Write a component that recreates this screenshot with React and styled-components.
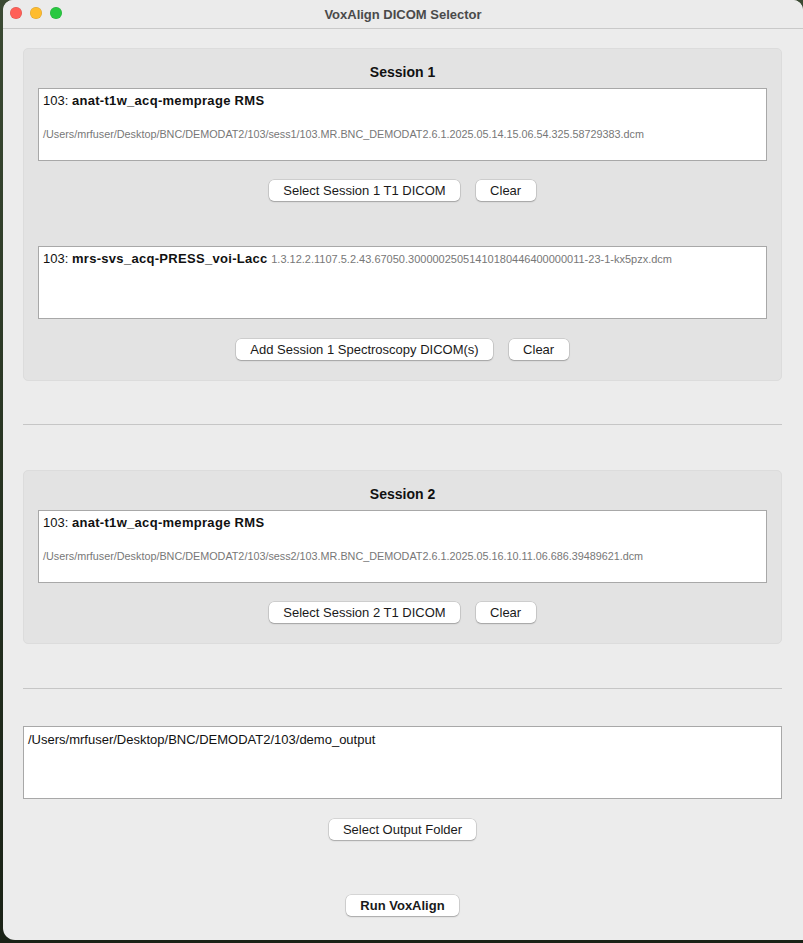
import React from "react";
import styled, { createGlobalStyle } from "styled-components";

const GlobalStyle = createGlobalStyle`
  html, body {
    margin: 0;
    padding: 0;
    background: #1f2a1c;
  }
  body {
    font-family: "Liberation Sans", Arial, sans-serif;
    -webkit-font-smoothing: antialiased;
  }
`;

const Desktop = styled.div`
  width: 803px;
  height: 943px;
  background: linear-gradient(180deg, #3b4a33 0%, #24301f 60%, #1a2216 100%);
  padding-left: 3px;
  box-sizing: border-box;
  overflow: hidden;
`;

const Window = styled.div`
  width: 800px;
  height: 940px;
  background: #ececec;
  border-radius: 10px 10px 0 12px;
  overflow: hidden;
  display: flex;
  flex-direction: column;
`;

const TitleBar = styled.div`
  position: relative;
  height: 28px;
  flex: none;
  background: #ebebeb;
  border-bottom: 1px solid #c9c9c9;
  display: flex;
  align-items: center;
  justify-content: center;
  font-size: 13px;
  font-weight: bold;
  color: #4a4a4a;
`;

const Lights = styled.div`
  position: absolute;
  left: 7px;
  top: 7px;
  display: flex;
  gap: 8px;
`;

const Light = styled.span`
  width: 12px;
  height: 12px;
  border-radius: 50%;
  background: ${(p) => p.$color};
  box-shadow: inset 0 0 0 0.5px rgba(0, 0, 0, 0.15);
`;

const Content = styled.div`
  padding: 19px 21px 0 20px;
  display: flex;
  flex-direction: column;
`;

const Group = styled.section`
  background: #e3e3e3;
  border: 1px solid #dcdcdc;
  border-radius: 5px;
  padding: 14px 14px 20px;
  display: flex;
  flex-direction: column;
`;

const GroupTitle = styled.div`
  text-align: center;
  font-size: 14px;
  font-weight: bold;
  line-height: 18px;
  color: #111;
  margin-bottom: 7px;
`;

const TextBox = styled.div`
  background: #fff;
  border: 1px solid #a8a8a8;
  height: 73px;
  box-sizing: border-box;
  padding: 4px 4px;
  font-size: 13px;
  line-height: 16px;
  color: #111;
  overflow: hidden;
  white-space: nowrap;
`;

const Line = styled.div`
  line-height: 16px;
  b {
    letter-spacing: 0.3px;
  }
`;

const PathLine = styled.div`
  margin-top: 17px;
  font-size: 10.8px;
  line-height: 16px;
  color: #777;
`;

const Small = styled.span`
  font-size: 11px;
  color: #777;
`;

const ButtonRow = styled.div`
  display: flex;
  justify-content: center;
  gap: 16px;
  margin-top: ${(p) => p.$top || 19}px;
`;

const Button = styled.button`
  height: 21px;
  padding: 0 ${(p) => p.$pad || 14}px;
  min-width: 60px;
  background: #fff;
  border: none;
  border-radius: 5px;
  box-shadow: 0 0 0 0.5px rgba(0, 0, 0, 0.18), 0 1px 1.5px rgba(0, 0, 0, 0.22);
  font-family: inherit;
  font-size: 13px;
  font-weight: ${(p) => (p.$bold ? "bold" : "normal")};
  color: #1a1a1a;
  cursor: default;
`;

const Spacer = styled.div`
  height: ${(p) => p.$h}px;
  flex: none;
`;

const Separator = styled.hr`
  margin: 0;
  border: none;
  border-top: 1px solid #c6c6c6;
  height: 0;
`;

const OutputBox = styled(TextBox)`
  padding: 5px 4px;
`;

function SessionBox({ name, path }) {
  return (
    <TextBox>
      <Line>
        103: <b>{name}</b>
      </Line>
      <PathLine>{path}</PathLine>
    </TextBox>
  );
}

export default function App() {
  return (
    <Desktop>
      <GlobalStyle />
      <Window>
        <TitleBar>
          <Lights>
            <Light $color="#ff5f57" />
            <Light $color="#febc2e" />
            <Light $color="#28c840" />
          </Lights>
          VoxAlign DICOM Selector
        </TitleBar>
        <Content>
          <Group>
            <GroupTitle>Session 1</GroupTitle>
            <SessionBox
              name="anat-t1w_acq-memprage RMS"
              path="/Users/mrfuser/Desktop/BNC/DEMODAT2/103/sess1/103.MR.BNC_DEMODAT2.6.1.2025.05.14.15.06.54.325.58729383.dcm"
            />
            <ButtonRow>
              <Button>Select Session 1 T1 DICOM</Button>
              <Button>Clear</Button>
            </ButtonRow>
            <Spacer $h={45} />
            <TextBox>
              <Line>
                103: <b>mrs-svs_acq-PRESS_voi-Lacc</b>{" "}
                <Small>
                  1.3.12.2.1107.5.2.43.67050.30000025051410180446400000011-23-1-kx5pzx.dcm
                </Small>
              </Line>
            </TextBox>
            <ButtonRow $top={20}>
              <Button>Add Session 1 Spectroscopy DICOM(s)</Button>
              <Button>Clear</Button>
            </ButtonRow>
          </Group>
          <Spacer $h={43} />
          <Separator />
          <Spacer $h={45} />
          <Group>
            <GroupTitle>Session 2</GroupTitle>
            <SessionBox
              name="anat-t1w_acq-memprage RMS"
              path="/Users/mrfuser/Desktop/BNC/DEMODAT2/103/sess2/103.MR.BNC_DEMODAT2.6.1.2025.05.16.10.11.06.686.39489621.dcm"
            />
            <ButtonRow>
              <Button>Select Session 2 T1 DICOM</Button>
              <Button>Clear</Button>
            </ButtonRow>
          </Group>
          <Spacer $h={44} />
          <Separator />
          <Spacer $h={37} />
          <OutputBox>/Users/mrfuser/Desktop/BNC/DEMODAT2/103/demo_output</OutputBox>
          <ButtonRow $top={20}>
            <Button>Select Output Folder</Button>
          </ButtonRow>
          <ButtonRow $top={55}>
            <Button $bold>Run VoxAlign</Button>
          </ButtonRow>
        </Content>
      </Window>
    </Desktop>
  );
}
